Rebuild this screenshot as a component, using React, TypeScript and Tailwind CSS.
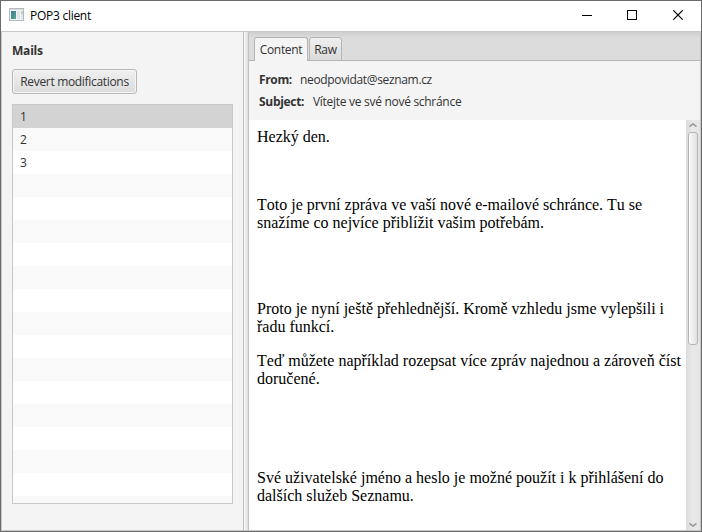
import React from "react";

const rows = ["1", "2", "3", ...Array<string>(15).fill("")];

const paragraphs = [
  { gap: "mt-0", lines: ["Hezký den."] },
  {
    gap: "mt-[50px]",
    lines: ["Toto je první zpráva ve vaší nové e-mailové schránce. Tu se", "snažíme co nejvíce přiblížit vašim potřebám."],
  },
  {
    gap: "mt-[68px]",
    lines: ["Proto je nyní ještě přehlednější. Kromě vzhledu jsme vylepšili i", "řadu funkcí."],
  },
  {
    gap: "mt-[16px]",
    lines: ["Teď můžete například rozepsat více zpráv najednou a zároveň číst", "doručené."],
  },
  {
    gap: "mt-[81px]",
    lines: ["Své uživatelské jméno a heslo je možné použít i k přihlášení do", "dalších služeb Seznamu."],
  },
];

function TitleBar() {
  return (
    <header className="flex h-[31px] shrink-0 items-center border-b border-[#c8c8c8] bg-white">
      <svg className="-mt-[3px] ml-2 h-[13px] w-[15px]" viewBox="0 0 15 13" shapeRendering="crispEdges">
        <defs>
          <linearGradient id="app-pane" x1="0" y1="0" x2="1" y2="1">
            <stop offset="0" stopColor="#4274a3" />
            <stop offset="1" stopColor="#5bac83" />
          </linearGradient>
        </defs>
        <rect x=".5" y=".5" width="14" height="12" fill="#f1f3f4" stroke="#b2b8bd" />
        <rect x="1" y="1" width="13" height="1" fill="#d6dce0" />
        <rect x="2" y="3" width="5" height="8" fill="url(#app-pane)" />
        <rect x="8" y="3" width="3" height="8" fill="#e2e6e9" />
        <rect x="12" y="3" width="2" height="3" fill="#b7d5c9" />
        <rect x="12" y="6" width="2" height="5" fill="#dce5ea" />
      </svg>
      <h1 className="ml-[6px] text-[12px] leading-4 tracking-[-0.27px] text-black">POP3 client</h1>
      <svg className="-mt-[2px] ml-auto mr-[17px] h-[10px] w-[102px]" viewBox="0 0 102 10" fill="none" stroke="#000">
        <path d="M0 5.5h10M45.5 .5h9v9h-9z" shapeRendering="crispEdges" />
        <path d="M91.3 .3l9.4 9.4M100.7 .3l-9.4 9.4" strokeWidth="1.1" />
      </svg>
    </header>
  );
}

function Sidebar() {
  return (
    <aside className="flex w-[241px] shrink-0 flex-col pl-[10px] pt-[11px]">
      <h2 className="h-4 text-[12px] font-bold leading-4 tracking-[-0.2px]">Mails</h2>
      <button className="mt-[10px] flex h-[25px] w-[125px] items-center justify-center rounded-[3px] border border-[#b8b8b8] bg-linear-to-b from-[#f0f0f0] to-[#dcdcdc] shadow-[inset_0_0_0_1px_#f6f6f6]">
        <span className="whitespace-nowrap tracking-[-0.32px]">Revert modifications</span>
      </button>
      <ul className="mt-[10px] h-[400px] w-[221px] overflow-hidden border border-[#c8c8c8]">
        {rows.map((label, i) => (
          <li
            key={i}
            className={`h-[23px] pl-[7px] leading-[23px] ${i === 0 ? "bg-[#d3d3d3]" : i % 2 ? "bg-[#f9f9f9]" : "bg-white"}`}
          >
            {label}
          </li>
        ))}
      </ul>
    </aside>
  );
}

function Tabs() {
  return (
    <nav className="flex h-[29px] shrink-0 items-end bg-[#dcdcdc] bg-linear-to-b from-[#cecece] via-[#dcdcdc] via-20% to-[#dcdcdc] pl-[5px] shadow-[inset_0_-1px_0_#b5b5b5]">
      <div className="flex h-[24px] w-[54px] items-center justify-center rounded-t-[3px] border border-b-0 border-[#b5b5b5] bg-[#f4f4f4] pt-px">
        Content
      </div>
      <div className="ml-px flex h-[24px] w-[33px] items-center justify-center rounded-t-[3px] border border-[#b5b5b5] bg-linear-to-b from-[#efefef] to-[#dadada] pt-px">
        Raw
      </div>
    </nav>
  );
}

function ScrollBar() {
  return (
    <div className="flex w-[14px] shrink-0 flex-col items-center bg-linear-to-r from-[#dcdcdc] via-[#e9e9e9] to-[#e5e5e5]">
      <svg className="mt-[3px] h-[4px] w-2 shrink-0" viewBox="0 0 8 4" fill="none" stroke="#999" strokeWidth="1.5">
        <path d="M.5 3.7L4 .8l3.5 2.9" />
      </svg>
      <div className="mt-[5px] h-[213px] w-[10px] rounded-[3px] border border-[#b5b5b5] bg-linear-to-r from-[#fafafa] to-[#e0e0e0]" />
      <svg className="mb-[3px] mt-auto h-[4px] w-2 shrink-0" viewBox="0 0 8 4" fill="none" stroke="#999" strokeWidth="1.5">
        <path d="M.5 .3L4 3.2 7.5 .3" />
      </svg>
    </div>
  );
}

function Message() {
  return (
    <main className="flex min-w-0 flex-1 flex-col">
      <Tabs />
      <dl className="h-[59px] shrink-0 pl-[10px] pt-[11px] leading-4">
        <div className="flex h-[22px]">
          <dt className="w-[41px] font-bold tracking-[-0.35px]">From:</dt>
          <dd className="tracking-[-0.34px]">neodpovidat@seznam.cz</dd>
        </div>
        <div className="flex h-[22px]">
          <dt className="w-[54px] font-bold tracking-[-0.3px]">Subject:</dt>
          <dd className="tracking-[-0.29px]">Vítejte ve své nové schránce</dd>
        </div>
      </dl>
      <div className="flex min-h-0 flex-1 bg-white">
        <article className="flex-1 overflow-hidden whitespace-nowrap pl-2 pt-2 font-['Liberation_Serif',serif] text-[16px] leading-[18px] tracking-normal text-black [font-kerning:none]">
          {paragraphs.map((p) => (
            <p key={p.lines[0]} className={p.gap}>
              {p.lines.map((line) => (
                <span key={line} className="block">{line}</span>
              ))}
            </p>
          ))}
        </article>
        <ScrollBar />
      </div>
    </main>
  );
}

export default function App() {
  return (
    <div className="flex h-[532px] w-[702px] flex-col overflow-hidden border border-[#6b6b6b] bg-[#f4f4f4] font-['Open_Sans','Noto_Sans',sans-serif] text-[12px] tracking-[-0.3px] text-[#333]">
      <TitleBar />
      <div className="flex min-h-0 flex-1 border-x border-b border-[#c8c8c8]">
        <Sidebar />
        <div className="w-[6px] shrink-0 border-x border-[#c0c0c0] bg-linear-to-r from-[#fafafa] to-[#dedede]" />
        <Message />
      </div>
    </div>
  );
}
